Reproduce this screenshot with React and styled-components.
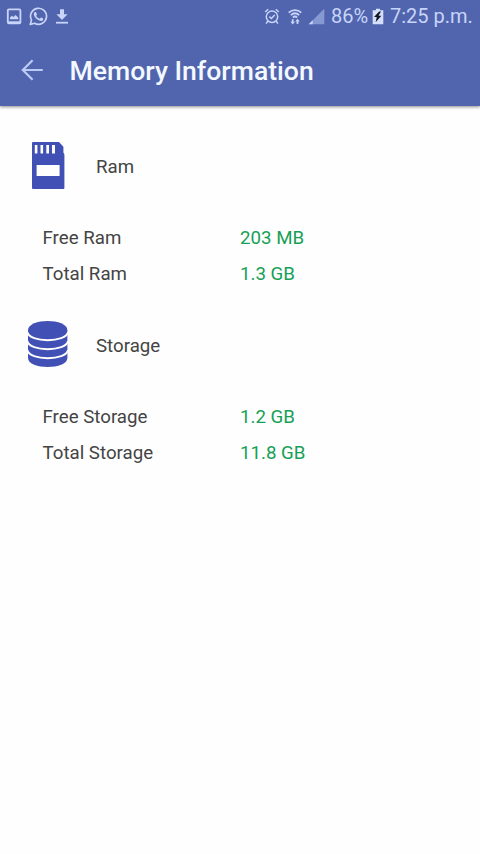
import React from 'react';
import styled, { createGlobalStyle } from 'styled-components';

const GlobalStyle = createGlobalStyle`
  * {
    box-sizing: border-box;
  }

  body {
    margin: 0;
    background: #fefefe;
    font-family: Roboto, 'Liberation Sans', sans-serif;
  }
`;

const Screen = styled.div`
  min-height: 100vh;
  display: flex;
  flex-direction: column;
`;

const Header = styled.header`
  height: 106px;
  background: #5165af;
  box-shadow: 0 1px 3px rgba(0, 0, 0, 0.45);
`;

const StatusBar = styled.div`
  height: 33px;
  padding: 0 8px 0 6px;
  display: flex;
  align-items: center;
  justify-content: space-between;
  color: #c8d4f8;

  svg {
    display: block;
    flex-shrink: 0;
  }
`;

const Notifications = styled.div`
  display: flex;
  align-items: center;
  gap: 7px;
`;

const SystemStatus = styled.div`
  display: flex;
  align-items: center;
`;

const Indicators = styled.div`
  display: flex;
  align-items: center;
  gap: 5px;

  svg:first-child {
    margin-right: 2px;
  }
`;

const StatusText = styled.span`
  width: ${({ $width }) => $width}px;
  margin: 0 4px 0 6px;
  font-size: 20px;
  line-height: 33px;
  white-space: nowrap;

  &:last-child {
    margin-right: 0;
  }
`;

const Toolbar = styled.div`
  height: 73px;
  padding-left: 20px;
  display: flex;
  align-items: center;
`;

const BackButton = styled.button`
  width: 24px;
  height: 24px;
  margin: 0 25.5px 0 0;
  padding: 0;
  border: none;
  background: none;
  color: #bccbf5;
  cursor: pointer;

  svg {
    display: block;
  }
`;

const Title = styled.h1`
  margin: 0;
  padding-top: 3px;
  color: #f4f8ff;
  font-size: 26.6px;
  font-weight: 500;
  line-height: 32px;
  white-space: nowrap;
`;

const Content = styled.main`
  padding-top: 34px;
`;

const Section = styled.section`
  height: 179px;
`;

const SectionHeader = styled.div`
  height: 52px;
  padding-left: 26px;
  display: flex;
  align-items: center;
  gap: 26px;
`;

const SectionTitle = styled.h2`
  margin: 0;
  padding-top: 2px;
  color: #444;
  font-size: 18.7px;
  font-weight: 400;
`;

const Rows = styled.dl`
  margin: 0;
  padding: 28px 0 0 42.5px;
`;

const Row = styled.div`
  height: 36px;
  display: grid;
  grid-template-columns: 197.5px 1fr;
  align-items: center;
  font-size: 18.7px;
`;

const Label = styled.dt`
  color: #444;
`;

const Value = styled.dd`
  margin: 0;
  color: #16a056;
`;

const PictureIcon = () => (
  <svg width="16" height="18" viewBox="0 0 16 18">
    <rect x="1.8" y="1.4" width="12.6" height="14" rx="1.2" fill="none" stroke="currentColor" strokeWidth="1.8" />
    <path d="M4 11.3V9.4l2-1.6 1.5 1.2 2-2 2.7 2.6v1.7z" fill="currentColor" />
    <path d="M2 14.3h12" stroke="currentColor" strokeWidth="2" />
  </svg>
);

const WhatsAppIcon = () => (
  <svg width="19" height="19" viewBox="0 0 24 24" fill="currentColor">
    <path d="M17.472 14.382c-.297-.149-1.758-.867-2.03-.967-.273-.099-.471-.148-.67.15-.197.297-.767.966-.94 1.164-.173.199-.347.223-.644.075-.297-.15-1.255-.463-2.39-1.475-.883-.788-1.48-1.761-1.653-2.059-.173-.297-.018-.458.13-.606.134-.133.298-.347.446-.52.149-.174.198-.298.298-.497.099-.198.05-.371-.025-.52-.075-.149-.669-1.612-.916-2.207-.242-.579-.487-.5-.669-.51-.173-.008-.371-.01-.57-.01-.198 0-.52.074-.792.372-.272.297-1.04 1.016-1.04 2.479 0 1.462 1.065 2.875 1.213 3.074.149.198 2.096 3.2 5.077 4.487.709.306 1.262.489 1.694.625.712.227 1.36.195 1.871.118.571-.085 1.758-.719 2.006-1.413.248-.694.248-1.289.173-1.413-.074-.124-.272-.198-.57-.347" />
    <path d="M1.6 22l1.5-5.6A10.1 10.1 0 1 1 7.1 20.5z" fill="none" stroke="currentColor" strokeWidth="2.1" strokeLinejoin="round" />
  </svg>
);

const DownloadIcon = () => (
  <svg width="14" height="18" viewBox="0 0 14 18">
    <path d="M5 1.3h4v5h3.6L7 12 1.4 6.3H5z" fill="currentColor" />
    <path d="M1 14.7h12" stroke="currentColor" strokeWidth="1.8" />
  </svg>
);

const AlarmIcon = () => (
  <svg width="16" height="18" viewBox="0 0 16 18" fill="none" stroke="currentColor" strokeWidth="1.5">
    <circle cx="8" cy="8.7" r="5.7" />
    <path d="M5.4 8.6l2 1.9 3.3-3.5M1.2 4l3-2.7M14.8 4l-3-2.7M3.9 13l-1.8 2.6M12.1 13l1.8 2.6" />
  </svg>
);

const WifiIcon = () => (
  <svg width="16" height="18" viewBox="0 0 16 18" fill="none" stroke="currentColor">
    <path d="M1.7 4.6C5.3 1.2 10.7 1.2 14.3 4.6M3.8 7.1c2.5-2.2 5.9-2.2 8.4 0M5.8 9.5c1.3-1.2 3.1-1.2 4.4 0" strokeWidth="1.7" />
    <path d="M5.7 16.4l-2.3-2.7h1.4v-2.4h1.8v2.4H8zM10.5 10.8l2.3 2.7h-1.4v2.5H9.6v-2.5H8.2z" fill="currentColor" stroke="none" />
  </svg>
);

const SignalIcon = () => (
  <svg width="17" height="17" viewBox="0 0 17 17">
    <path d="M16.3 .7v15.6H.7z" fill="#8799d2" />
    <path d="M4.7 12.3v4h-4z" fill="currentColor" />
  </svg>
);

const BatteryIcon = () => (
  <svg width="12" height="17" viewBox="0 0 12 17">
    <path d="M4 .8h4v1.4h3.3v14H.7v-14H4z" fill="#d5dffc" />
    <path d="M7.2 3.6L2 9h2.8l-1.2 5.2 5.8-6.4H6.5L9 3.6z" fill="#111520" />
  </svg>
);

const BackIcon = () => (
  <svg width="24" height="24" viewBox="0 0 24 24" fill="none" stroke="currentColor" strokeWidth="2.2">
    <path d="M22.8 12H2.9M12.6 2.2L2.8 12l9.8 9.8" />
  </svg>
);

const SdCardIcon = () => (
  <svg width="44" height="50" viewBox="0 0 44 50">
    <path d="M7 1h26l4.4 4.8v5.6l1 2.2V47a1 1 0 0 1-1 1H7a1 1 0 0 1-1-1V2a1 1 0 0 1 1-1z" fill="#4050b5" />
    <path d="M8.8 4h2.6v8.6H8.8zM14.5 4h2.6v8.6h-2.6zM20.3 4h2.7v8.6h-2.7zM26 4h3v8.6h-3zM10.6 24h23v11h-23z" fill="#fefefe" />
  </svg>
);

const DatabaseIcon = () => (
  <svg width="44" height="50" viewBox="0 0 44 50">
    <path d="M2 10.4C2 -2 41.4 -2 41.4 10.4V38c0 12-39.4 12-39.4 0z" fill="#4050b5" />
    <path
      d="M1.4 12C3 23 40.4 23 42 12M1.4 21C3 32 40.4 32 42 21M1.4 30C3 41 40.4 41 42 30"
      fill="none"
      stroke="#fefefe"
      strokeWidth="1.8"
    />
  </svg>
);

const sections = [
  {
    title: 'Ram',
    icon: SdCardIcon,
    rows: [
      { label: 'Free Ram', value: '203 MB' },
      { label: 'Total Ram', value: '1.3 GB' }
    ]
  },
  {
    title: 'Storage',
    icon: DatabaseIcon,
    rows: [
      { label: 'Free Storage', value: '1.2 GB' },
      { label: 'Total Storage', value: '11.8 GB' }
    ]
  }
];

const App = () => {
  return (
    <Screen>
      <GlobalStyle />
      <Header>
        <StatusBar>
          <Notifications>
            <PictureIcon />
            <WhatsAppIcon />
            <DownloadIcon />
          </Notifications>
          <SystemStatus>
            <Indicators>
              <AlarmIcon />
              <WifiIcon />
              <SignalIcon />
            </Indicators>
            <StatusText $width={37}>86%</StatusText>
            <BatteryIcon />
            <StatusText $width={82}>7:25 p.m.</StatusText>
          </SystemStatus>
        </StatusBar>
        <Toolbar>
          <BackButton aria-label="Back">
            <BackIcon />
          </BackButton>
          <Title>Memory Information</Title>
        </Toolbar>
      </Header>
      <Content>
        {sections.map(({ title, icon: Icon, rows }) => (
          <Section key={title}>
            <SectionHeader>
              <Icon />
              <SectionTitle>{title}</SectionTitle>
            </SectionHeader>
            <Rows>
              {rows.map((row) => (
                <Row key={row.label}>
                  <Label>{row.label}</Label>
                  <Value>{row.value}</Value>
                </Row>
              ))}
            </Rows>
          </Section>
        ))}
      </Content>
    </Screen>
  );
};

export default App;
